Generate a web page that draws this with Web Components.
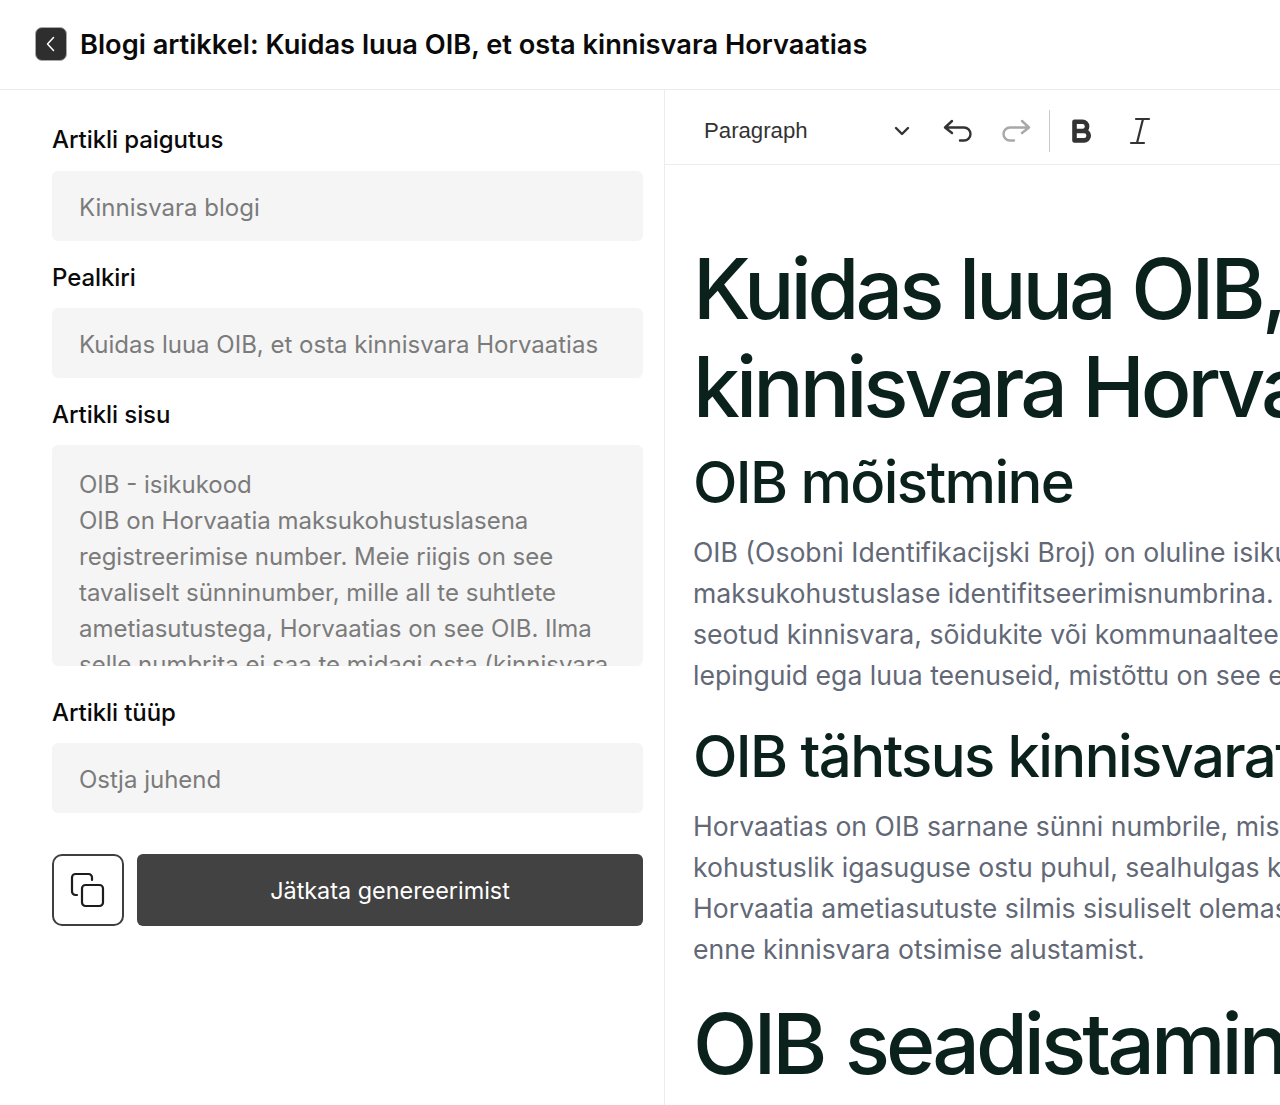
<!doctype html>
<html lang="et">
<head>
<meta charset="utf-8">
<title>Blogi artikkel</title>
<style>
	html, body { margin: 0; height: 100%; overflow: hidden; background: #fff; }
	body { font-family: Inter, 'Liberation Sans', sans-serif; }
</style>
</head>
<body>
<blog-page>
	<page-header slot="header">Blogi artikkel: Kuidas luua OIB, et osta kinnisvara Horvaatias</page-header>
	<article-form slot="form">
		<form-field label="Artikli paigutus">Kinnisvara blogi</form-field>
		<form-field label="Pealkiri">Kuidas luua OIB, et osta kinnisvara Horvaatias</form-field>
		<form-field label="Artikli sisu" multiline>OIB - isikukood<br>OIB on Horvaatia maksukohustuslasena<br>registreerimise number. Meie riigis on see<br>tavaliselt sünninumber, mille all te suhtlete<br>ametiasutustega, Horvaatias on see OIB. Ilma<br>selle numbrita ei saa te midagi osta (kinnisvara</form-field>
		<form-field label="Artikli tüüp">Ostja juhend</form-field>
		<form-actions>Jätkata genereerimist</form-actions>
	</article-form>
	<article-editor slot="editor">
		<h-one>Kuidas luua OIB, et osta<br>kinnisvara Horvaatias</h-one>
		<h-two>OIB mõistmine</h-two>
		<body-text>OIB (Osobni Identifikacijski Broj) on oluline isikukood<br>maksukohustuslase identifitseerimisnumbrina. Sellega on<br>seotud kinnisvara, sõidukite või kommunaalteenuste<br>lepinguid ega luua teenuseid, mistõttu on see esmatähtis</body-text>
		<h-two class="second">OIB tähtsus kinnisvaratehingutes</h-two>
		<body-text class="second">Horvaatias on OIB sarnane sünni numbrile, mis on<br>kohustuslik igasuguse ostu puhul, sealhulgas kinnisvara<br>Horvaatia ametiasutuste silmis sisuliselt olemas<br>enne kinnisvara otsimise alustamist.</body-text>
		<h-one class="third">OIB seadistamine</h-one>
	</article-editor>
</blog-page>

<script>
class BlogPage extends HTMLElement {
	constructor() {
		super();
		this.attachShadow({ mode: 'open' });
		this.shadowRoot.innerHTML = `
			<style>
				:host { display: grid; grid-template-columns: 665px 615px; grid-template-rows: 90px 1015px; width: 1280px; height: 1105px; overflow: hidden; }
				.header { grid-column: 1 / 3; }
				.form { border-right: 1px solid #ececec; min-width: 0; }
				.editor { min-width: 0; overflow: hidden; }
			</style>
			<div class="header"><slot name="header"></slot></div>
			<div class="form"><slot name="form"></slot></div>
			<div class="editor"><slot name="editor"></slot></div>
		`;
	}
}

class PageHeader extends HTMLElement {
	constructor() {
		super();
		this.attachShadow({ mode: 'open' });
		this.shadowRoot.innerHTML = `
			<style>
				:host { display: flex; align-items: center; gap: 13px; box-sizing: border-box; height: 90px; padding: 0 0 0 35px; border-bottom: 1px solid #ececec; }
				.back { display: flex; align-items: center; justify-content: center; box-sizing: border-box; width: 32px; height: 34px; margin-bottom: 1px; background: #2e2e2e; border: 1.5px solid #a8a8a8; border-radius: 7px; }
				h1 { margin: 0; font-size: 27.22px; line-height: 34px; font-weight: 600; color: #0a0a0a; white-space: nowrap; }
			</style>
			<div class="back">
				<svg width="18" height="18" viewBox="0 0 18 18" fill="none" stroke="#fff" stroke-width="1.5" stroke-linecap="round" stroke-linejoin="round"><path d="M11.5 2.5 5.5 9l6 6.5"/></svg>
			</div>
			<h1><slot></slot></h1>
		`;
	}
}

class ArticleForm extends HTMLElement {
	constructor() {
		super();
		this.attachShadow({ mode: 'open' });
		this.shadowRoot.innerHTML = `
			<style>
				:host { display: flex; flex-direction: column; gap: 19px; padding: 33px 21px 0 52px; }
			</style>
			<slot></slot>
		`;
	}
}

class FormField extends HTMLElement {
	constructor() {
		super();
		this.attachShadow({ mode: 'open' });
		this.shadowRoot.innerHTML = `
			<style>
				:host { display: flex; flex-direction: column; gap: 14px; }
				:host(:not(:first-child)) { gap: 13px; padding-top: 1px; }
				.label { font-size: 24px; line-height: 34px; font-weight: 500; color: #0a0a0a; letter-spacing: -0.07px; }
				.box { box-sizing: border-box; height: 70px; padding: 19px 27px; background: #f5f5f5; border-radius: 6px; font-size: 24px; line-height: 36px; color: #7b7b7b; white-space: nowrap; overflow: hidden; }
				:host([multiline]) .box { height: 221px; padding-top: 22px; }
				:host([multiline]) { margin-bottom: 10px; }
			</style>
			<div class="label"></div>
			<div class="box"><slot></slot></div>
		`;
		this.shadowRoot.querySelector('.label').textContent = this.getAttribute('label');
	}
}

class FormActions extends HTMLElement {
	constructor() {
		super();
		this.attachShadow({ mode: 'open' });
		this.shadowRoot.innerHTML = `
			<style>
				:host { display: flex; gap: 13px; height: 72px; margin-top: 22px; }
				.copy { display: flex; align-items: center; justify-content: center; box-sizing: border-box; width: 72px; background: #fff; border: 2px solid #3f3f3f; border-radius: 10px; }
				.go { flex: 1; display: flex; align-items: center; justify-content: center; background: #424242; border-radius: 6px; color: #fff; font-size: 23.4px; }
			</style>
			<div class="copy">
				<svg width="36" height="36" viewBox="0 0 36 36" fill="none" stroke="#1c1c1c" stroke-width="2.2" stroke-linecap="round" stroke-linejoin="round">
					<path d="M22 8V5.5A3.5 3.5 0 0 0 18.5 2h-13A3.5 3.5 0 0 0 2 5.5v14A3.5 3.5 0 0 0 5.5 23H7"/>
					<rect x="12" y="13" width="21" height="21" rx="3.5"/>
				</svg>
			</div>
			<div class="go"><slot></slot></div>
		`;
	}
}

class ArticleEditor extends HTMLElement {
	constructor() {
		super();
		this.attachShadow({ mode: 'open' });
		this.shadowRoot.innerHTML = `
			<style>
				:host { display: block; height: 100%; }
				.bar { display: flex; align-items: center; box-sizing: border-box; height: 75px; padding: 8px 0 0 39px; border-bottom: 1px solid #ececec; color: #333; }
				.select { width: 207px; margin-right: 18px; display: flex; align-items: center; justify-content: space-between; font-family: 'Liberation Sans', sans-serif; font-size: 22.2px; }
				.tool { display: flex; align-items: center; justify-content: center; width: 58px; height: 42px; }
				.sep { width: 1px; height: 42px; background: #c9c9c9; margin: 0 3px 0 4px; }
				.content { padding: 75px 0 0 28px; white-space: nowrap; overflow: hidden; }
			</style>
			<div class="bar">
				<div class="select">Paragraph
					<svg width="18" height="18" viewBox="0 0 18 18" fill="none" stroke="#333" stroke-width="2.4" stroke-linecap="round" stroke-linejoin="round"><path d="m3 6 6 6 6-6"/></svg>
				</div>
				<div class="tool"><svg width="32" height="26" viewBox="0 0 32 26" fill="none" stroke="#333" stroke-width="2.4" stroke-linecap="round" stroke-linejoin="round"><path d="M10 3 3 9.5 10 15M3.5 9.5H22a6.5 6.5 0 0 1 0 13h-4"/></svg></div>
				<div class="tool"><svg width="32" height="26" viewBox="0 0 32 26" fill="none" stroke="#a8a8a8" stroke-width="2.4" stroke-linecap="round" stroke-linejoin="round"><path d="M22 3l7 6.5-7 5.5M28.5 9.5H10a6.5 6.5 0 0 0 0 13h4"/></svg></div>
				<div class="sep"></div>
				<div class="tool"><svg width="26" height="28" viewBox="0 0 26 28" fill="none" stroke="#333" stroke-width="4.6" stroke-linejoin="round"><path d="M5.5 4.8h8a4.6 4.6 0 0 1 0 9.2h-8zM5.500 14h9.500a4.700 4.700 0 0 1 0 9.400H5.500z"/></svg></div>
				<div class="tool"><svg width="22" height="28" viewBox="0 0 22 28" fill="none" stroke="#333" stroke-width="2.2" stroke-linecap="round"><path d="M7 2h13M2 26h13M14 2 8 26"/></svg></div>
			</div>
			<div class="content"><slot></slot></div>
		`;
	}
}

class HOne extends HTMLElement {
	constructor() {
		super();
		this.attachShadow({ mode: 'open' });
		this.shadowRoot.innerHTML = `
			<style>
				:host { display: block; font-size: 84px; line-height: 98px; font-weight: 500; color: #0b211c; letter-spacing: -4px; }
				:host(.third) { margin-top: 25px; word-spacing: 3px; }
			</style>
			<slot></slot>
		`;
	}
}

class HTwo extends HTMLElement {
	constructor() {
		super();
		this.attachShadow({ mode: 'open' });
		this.shadowRoot.innerHTML = `
			<style>
				:host { display: block; font-size: 58px; line-height: 68px; font-weight: 500; color: #0b211c; letter-spacing: -1.6px; margin-top: 12px; }
				:host(.second) { margin-top: 26px; }
			</style>
			<slot></slot>
		`;
	}
}

class BodyText extends HTMLElement {
	constructor() {
		super();
		this.attachShadow({ mode: 'open' });
		this.shadowRoot.innerHTML = `
			<style>
				:host { display: block; margin-top: 16px; font-size: 26.6px; line-height: 41px; color: #626876; }
			</style>
			<slot></slot>
		`;
	}
}

customElements.define('blog-page', BlogPage);
customElements.define('page-header', PageHeader);
customElements.define('article-form', ArticleForm);
customElements.define('form-field', FormField);
customElements.define('form-actions', FormActions);
customElements.define('article-editor', ArticleEditor);
customElements.define('h-one', HOne);
customElements.define('h-two', HTwo);
customElements.define('body-text', BodyText);
</script>
</body>
</html>
